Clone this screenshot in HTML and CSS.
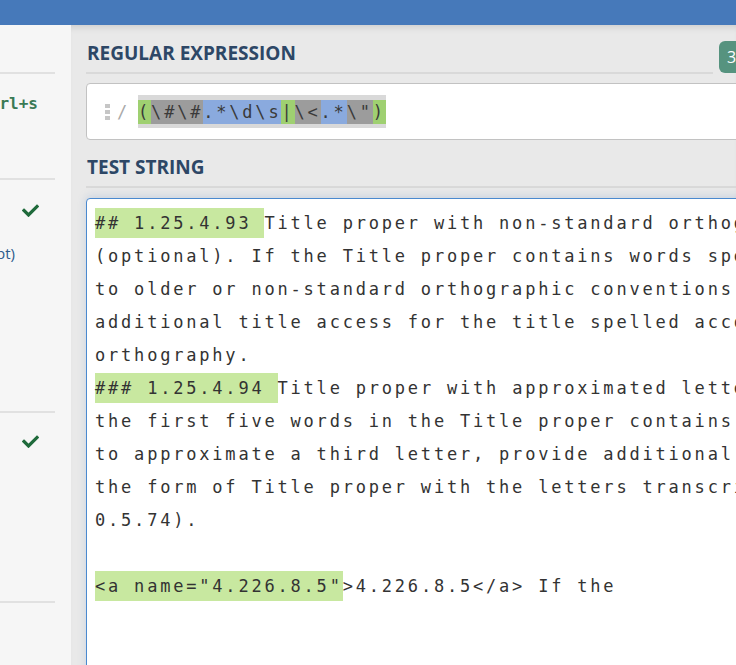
FILE: index.html
```html
<!DOCTYPE html>
<html>
<head>
<meta charset="utf-8">
<link rel="stylesheet" href="styles.css">
</head>
<body>
<header class="topbar"></header>
<div class="layout">
  <aside class="sidebar">
    <div class="side-sec s1"></div>
    <div class="side-sec s2">
      <div class="kbd-wrap"><span class="kbd">Ctrl+s</span></div>
    </div>
    <div class="side-sec s3">
      <svg class="check" width="17" height="13" viewBox="0 0 17 13"><path d="M2 6.5 L6.5 11 L15 2.5" fill="none" stroke="#1f6a3b" stroke-width="3.2" stroke-linecap="square"/></svg>
      <div class="flavor-wrap"><span class="flavor">ECMAScript (JavaScript)</span></div>
    </div>
    <div class="side-sec s4">
      <svg class="check" width="17" height="13" viewBox="0 0 17 13"><path d="M2 6.5 L6.5 11 L15 2.5" fill="none" stroke="#1f6a3b" stroke-width="3.2" stroke-linecap="square"/></svg>
    </div>
    <div class="side-sec s5"></div>
  </aside>
  <main class="main">
    <div class="regex-header">
      <h2 class="title short">Regular Expression</h2>
      <span class="badge">3 matches (0.4ms)</span>
    </div>
    <div class="regex-box">
      <svg class="grip" width="5" height="16" viewBox="0 0 5 16"><rect x="0" y="0" width="5" height="4" fill="#c6c6c6"/><rect x="0" y="6" width="5" height="4" fill="#c6c6c6"/><rect x="0" y="12" width="5" height="4" fill="#c6c6c6"/></svg>
      <span class="slash">/</span>
      <span class="rx"><span class="g">(</span><span class="k">\#\#</span><span class="b">.*\d\s</span><span class="g">|</span><span class="k">\&lt;</span><span class="b">.*</span><span class="k">\"</span><span class="g">)</span></span>
    </div>
    <h2 class="title full">Test String</h2>
    <div class="test-box">
      <div class="ln"><span class="m">## 1.25.4.93 </span>Title proper with non-standard orthography</div>
      <div class="ln">(optional). If the Title proper contains words spelled according</div>
      <div class="ln">to older or non-standard orthographic conventions, provide an</div>
      <div class="ln">additional title access for the title spelled according to modern</div>
      <div class="ln">orthography.</div>
      <div class="ln"><span class="m">### 1.25.4.94 </span>Title proper with approximated letters. If one of</div>
      <div class="ln">the first five words in the Title proper contains letters used</div>
      <div class="ln">to approximate a third letter, provide additional title access for</div>
      <div class="ln">the form of Title proper with the letters transcribed (see 1.</div>
      <div class="ln">0.5.74).</div>
      <div class="ln"> </div>
      <div class="ln"><span class="m">&lt;a name="4.226.8.5"</span>&gt;4.226.8.5&lt;/a&gt; If the</div>
    </div>
  </main>
</div>
</body>
</html>
```
FILE: styles.css
```css
html, body {
  margin: 0;
  padding: 0;
  height: 100%;
  overflow: hidden;
}
body {
  font-family: "Open Sans", "Liberation Sans", sans-serif;
  background: #e9e9e9;
}
.topbar {
  height: 25px;
  background: #4679ba;
}
.layout {
  display: flex;
  height: 640px;
}
.sidebar {
  width: 71px;
  flex: none;
  background: #f6f6f6;
  overflow: hidden;
  display: flex;
  flex-direction: column;
}
.side-sec {
  width: 55px;
  flex: none;
  border-bottom: 2px solid #e1e1e1;
}
.s1 { height: 47px; }
.s2 { height: 104px; }
.s3 { height: 231px; }
.s4 { height: 188px; }
.s5 { flex: 1; border-bottom: none; }
.kbd-wrap {
  width: 38px;
  display: flex;
  justify-content: flex-end;
  margin-top: 20px;
}
.kbd {
  font-family: "DejaVu Sans Mono", monospace;
  font-weight: bold;
  font-size: 16px;
  line-height: 20px;
  color: #3a7a55;
  white-space: nowrap;
}
.check {
  display: block;
  margin: 24px 0 0 22px;
}
.s4 .check { margin-top: 22px; }
.flavor-wrap {
  width: 15px;
  display: flex;
  justify-content: flex-end;
  margin-top: 25px;
}
.flavor {
  font-size: 15px;
  line-height: 22px;
  color: #2d5b8c;
  white-space: nowrap;
}
.main {
  flex: 1;
  min-width: 0;
  overflow: hidden;
  padding-left: 15px;
  box-shadow: inset 0 7px 7px -5px rgba(0, 0, 0, 0.13);
}
.regex-header {
  display: flex;
  align-items: flex-end;
  gap: 6px;
}
.title {
  margin: 0;
  padding: 16px 0 7px 1px;
  font-size: 19px;
  line-height: 24px;
  font-weight: 700;
  text-transform: uppercase;
  color: #2d4766;
  border-bottom: 2px solid #d9d9d9;
}
.title.short {
  width: 626px;
  flex: none;
}
.title.full {
  padding-top: 15px;
}
.badge {
  flex: none;
  height: 32px;
  margin-bottom: 1px;
  padding: 0 8px;
  border-radius: 6px 0 0 6px;
  background: #56937f;
  color: #fff;
  font-size: 16px;
  line-height: 32px;
  white-space: nowrap;
}
.regex-box {
  box-sizing: border-box;
  margin-top: 9px;
  width: 760px;
  height: 57px;
  border: 1px solid #c2c2c2;
  border-radius: 4px;
  background: #fff;
  display: flex;
  align-items: center;
  padding-left: 18px;
}
.grip { flex: none; }
.slash {
  margin-left: 7px;
  font-family: "DejaVu Sans Mono", monospace;
  font-size: 17px;
  letter-spacing: 2.8px;
  color: #a9a9a9;
}
.rx {
  margin-left: 8px;
  font-family: "DejaVu Sans Mono", monospace;
  font-size: 17px;
  letter-spacing: 2.8px;
  color: #3a3a3a;
  background: #d9d9d9;
  padding: 6.5px 0;
  white-space: pre;
}
.rx .g, .rx .k, .rx .b { padding: 2px 0; }
.rx .g { background: #9fd071; }
.rx .k { background: #9c9c9c; }
.rx .b { background: #8aaade; }
.test-box {
  margin-top: 10px;
  width: 760px;
  height: 520px;
  border: 1px solid #4a89cf;
  border-radius: 4px 0 0 0;
  background: #fff;
  padding: 8px 0 0 8px;
  box-shadow: 0 -2px 8px rgba(90, 130, 190, 0.22);
  font-family: "DejaVu Sans Mono", monospace;
  font-size: 17px;
  letter-spacing: 2.8px;
  line-height: 33px;
  color: #333;
}
.ln {
  white-space: pre;
  height: 33px;
}
.m {
  background: #c8e8a0;
  padding: 5px 0;
}
```
